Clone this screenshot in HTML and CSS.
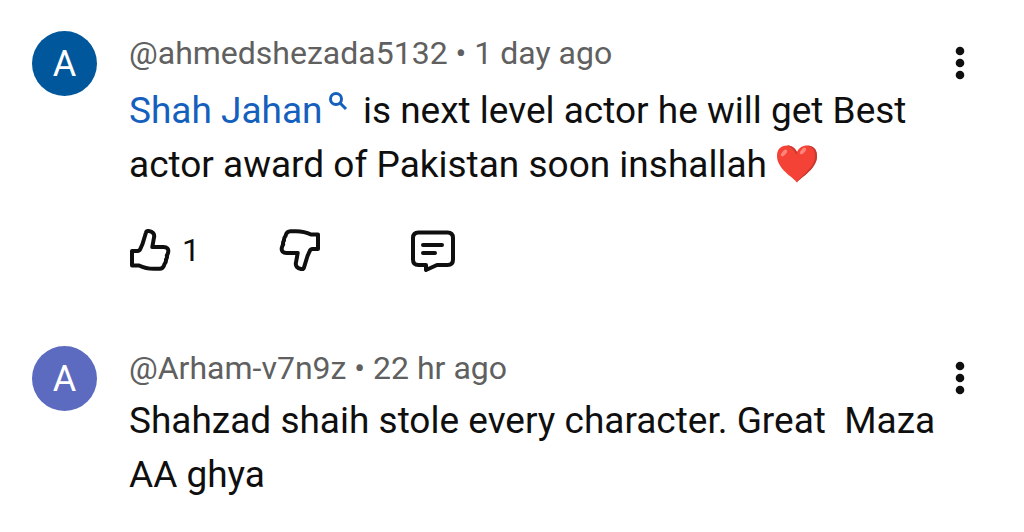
FILE: index.html
```html
<!DOCTYPE html>
<html lang="en">
<head>
    <meta charset="UTF-8">
    <meta name="viewport" content="width=device-width, initial-scale=1.0">
    <title>Comments</title>
    <link rel="stylesheet" href="styles.css">
</head>
<body>
    <svg class="defs" aria-hidden="true">
        <symbol id="thumb" viewBox="1 0 44 44">
            <path d="M4 23H9.500Q11.500 23 12.500 20.500L14.500 16L18 4.500Q18.500 2.500 21 3C24.500 3.500 27 6 26 9.500L24.300 19H35.500C39 19 40.800 21 40.200 24Q40 26 38.800 27.500Q39.500 29.500 38 31.500Q38.300 34 36.500 36C35.800 39 34.500 40.800 31.500 40.800H26C19 40.800 15 39.500 11 37.500H4Z"/>
        </symbol>
        <symbol id="more" viewBox="0 0 32 36">
            <circle cx="16" cy="6" r="4.300"/>
            <circle cx="16" cy="18" r="4.300"/>
            <circle cx="16" cy="30" r="4.300"/>
        </symbol>
    </svg>

    <main class="comments">
        <article class="comment">
            <div class="avatar">A</div>
            <div class="content">
                <p class="meta">@ahmedshezada5132 • 1 day ago</p>
                <p class="text"><a href="#">Shah Jahan</a> <svg class="search" viewBox="0 0 20 20" aria-hidden="true"><circle cx="8" cy="8" r="5.500"/><path d="M12 12L18 18"/></svg> is next level actor he will get Best actor award of Pakistan soon inshallah <svg class="heart" viewBox="0 0 42 38" role="img" aria-label="red heart"><path class="heart_base" d="M21 37.500C17 32 1 24 1 11C1 4 5 .500 11 .500C16 .500 19 3 21 7C23 3 26 .500 31 .500C37 .500 41 4 41 11C41 24 25 32 21 37.500Z"/><path class="heart_shade" d="M31 .500C37 .500 41 4 41 11C41 24 25 32 21 37.500C25 30 39 23 39 11C39 5 36 2 31 .500ZM11 .500C16 .500 19 3 21 7L20.500 10C18 5 16 2 11 .500Z"/><ellipse class="heart_shine" cx="8" cy="8" rx="4" ry="2" transform="rotate(-48 8 8)"/><ellipse class="heart_shine" cx="27" cy="6" rx="4" ry="2" transform="rotate(-48 27 6)"/></svg></p>
                <div class="actions">
                    <button class="like" aria-label="Like, 1"><svg class="icon" viewBox="0 0 44 44"><use href="#thumb"/></svg><span>1</span></button>
                    <button class="dislike" aria-label="Dislike"><svg class="icon flip" viewBox="0 0 44 44"><use href="#thumb"/></svg></button>
                    <button class="reply" aria-label="Reply">
                        <svg class="icon wide" viewBox="0 0 48 44">
                            <path d="M9.500 4.500H38.500Q44 4.500 44 10V31.500Q44 37 38.500 37H28L17 42V37H9.500Q4 37 4 31.500V10Q4 4.500 9.500 4.500Z"/>
                            <path d="M14 17H33M14 25H26"/>
                        </svg>
                    </button>
                </div>
            </div>
            <button class="more" aria-label="More options"><svg viewBox="0 0 32 36"><use href="#more"/></svg></button>
        </article>

        <article class="comment">
            <div class="avatar indigo">A</div>
            <div class="content">
                <p class="meta">@Arham-v7n9z • 22 hr ago</p>
                <p class="text">Shahzad shaih stole every character. Great&nbsp; Maza AA ghya</p>
            </div>
            <button class="more" aria-label="More options"><svg viewBox="0 0 32 36"><use href="#more"/></svg></button>
        </article>
    </main>
</body>
</html>
```

FILE: styles.css
```css
* { box-sizing: border-box; }
body, p { margin: 0; }
body {
    font-family: Roboto, "Liberation Sans", sans-serif;
    color: #0f0f0f;
    background: #fff;
}
button {
    margin: 0;
    padding: 0;
    border: 0 none;
    background: transparent;
    font: inherit;
    color: inherit;
    cursor: pointer;
}
svg { display: block; }
.defs { position: absolute; width: 0; height: 0; }

.comments {
    display: flex;
    flex-direction: column;
    gap: 74px;
    padding: 31px 48px 24px 32px;
}
.comment {
    display: flex;
    align-items: flex-start;
}
.avatar {
    flex: none;
    width: 65px;
    height: 65px;
    margin-right: 32px;
    border-radius: 50%;
    background: #01579b;
    color: #fff;
    font-size: 36px;
    line-height: 67px;
    text-align: center;
}
.avatar.indigo { background: #5c6bc0; }

.content { flex: 1; min-width: 0; }
.meta {
    margin-bottom: 4px;
    font-size: 32px;
    line-height: 44px;
    color: #606060;
}
.text {
    font-size: 37px;
    line-height: 54px;
}
.text a { color: #1560bd; text-decoration: none; }
.search {
    display: inline-block;
    width: 20px;
    height: 20px;
    margin: 12px 6px 0 -4px;
    vertical-align: 12px;
    fill: none;
    stroke: #1560bd;
    stroke-width: 3;
}
.heart {
    display: inline-block;
    width: 42px;
    height: 38px;
    vertical-align: -6px;
}
.heart_base { fill: #f44336; }
.heart_shade { fill: #c63a32; }
.heart_shine { fill: #ff847a; }

.actions {
    display: flex;
    align-items: center;
    margin-top: 36px;
    font-size: 32px;
}
.like {
    display: flex;
    align-items: center;
    gap: 9px;
    width: 148px;
    line-height: 44px;
}
.dislike { width: 132px; }
.icon {
    width: 44px;
    height: 44px;
    fill: none;
    stroke: #0f0f0f;
    stroke-width: 4;
    stroke-linejoin: round;
    stroke-linecap: round;
}
.icon.wide { width: 48px; }
.icon.flip { transform: rotate(180deg); }

.more {
    flex: none;
    width: 32px;
    padding: 14px 0;
}
.more svg { width: 32px; height: 36px; fill: #0f0f0f; }
```
